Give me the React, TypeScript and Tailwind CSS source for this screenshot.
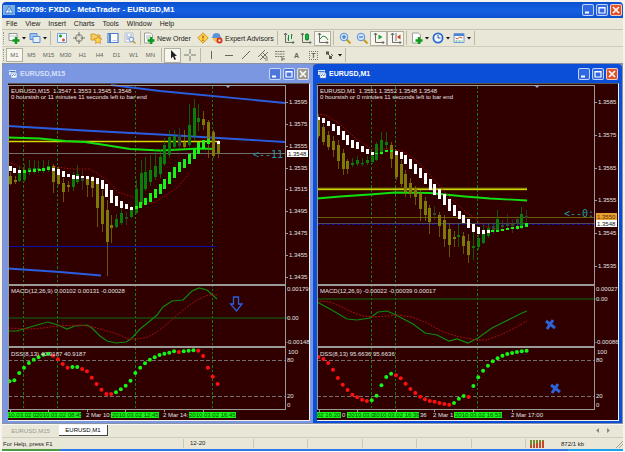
import type { ReactNode } from "react";

type Point = [number, number];
/** x, top, bottom of a body, then wick top and bottom, then colour key */
type Candle = [number, number, number, number, number, "o" | "g" | "d"];
type Block = [number, number, number, "w" | "l"];

const FONT = "font-['Liberation_Sans',Arial,sans-serif]";
const COLORS = { o: "#7d7a06", g: "#087d0a", d: "#2c4a2c", w: "#ffffff", l: "#16f416" };

const pts = (list: Point[]) => list.map((p) => p.join(",")).join(" ");

/* ---------- chart data ---------- */

interface ChartData {
  left: number;
  symbol: string;
  quotes: string;
  countdown: string;
  macd: string;
  dss: string;
  verticals: number[];
  candles: Candle[];
  blocks: Block[];
  macdMain: Point[];
  macdSignal: Point[];
  zeroY: number;
  dots: number[];
  reds: [number, number][];
  prices: [string, number][];
  macdTop: string;
  macdBottom: string;
  overlay: ReactNode;
  times: ReactNode;
}

const M15: ChartData = {
  left: 8,
  symbol: "EURUSD,M15",
  quotes: "1.3547 1.3553 1.3545 1.3548",
  countdown: "0 hourstsh or 11 minutes 11 seconds left to bar end",
  macd: "MACD(12,26,9) 0.00102 0.00131 -0.00028",
  dss: "DSS(8,13) 40.9187 40.9187",
  verticals: [24, 58, 136, 213],
  candles: [
    [10, 176, 184, 172, 185, "o"], [15, 180, 182, 176, 184, "o"], [19, 171, 181, 166, 182, "g"],
    [24, 170, 180, 164, 182, "g"], [29, 168, 170, 160, 175, "g"], [34, 168, 170, 160, 174, "g"],
    [38, 168, 170, 161, 173, "g"], [43, 168, 170, 160, 173, "g"], [48, 166, 169, 160, 172, "g"],
    [53, 166, 182, 164, 193, "o"], [58, 170, 184, 167, 185, "o"], [63, 183, 192, 178, 202, "o"],
    [68, 185, 187, 181, 192, "o"], [73, 176, 187, 172, 191, "g"], [77, 174, 182, 165, 184, "g"],
    [82, 177, 181, 170, 190, "d"], [87, 178, 185, 176, 197, "o"], [92, 181, 188, 176, 197, "o"],
    [97, 184, 208, 180, 227, "o"], [102, 196, 224, 190, 232, "o"], [107, 210, 242, 200, 276, "o"],
    [111, 225, 228, 215, 243, "o"], [116, 219, 227, 214, 228, "g"], [121, 213, 223, 208, 225, "g"],
    [126, 217, 219, 212, 225, "d"], [131, 210, 217, 206, 218, "g"], [136, 189, 213, 180, 214, "g"],
    [141, 173, 204, 160, 207, "g"], [145, 172, 189, 157, 191, "g"], [150, 170, 182, 155, 186, "g"],
    [155, 166, 177, 149, 180, "g"], [160, 157, 174, 149, 178, "g"], [164, 145, 164, 138, 166, "g"],
    [169, 137, 155, 130, 158, "g"], [174, 136, 147, 130, 150, "g"], [179, 135, 146, 128, 148, "d"],
    [184, 142, 147, 130, 149, "o"], [189, 125, 145, 104, 147, "g"], [194, 108, 136, 99, 141, "g"],
    [198, 118, 122, 104, 131, "g"], [203, 119, 125, 111, 130, "o"], [208, 122, 140, 120, 158, "o"],
    [213, 132, 156, 130, 158, "o"], [218, 143, 153, 140, 158, "o"],
  ],
  blocks: [
    [10, 166, 171, "w"], [14, 168, 173, "w"], [19, 170, 173, "w"], [24, 170, 173, "l"],
    [29, 170, 172, "l"], [34, 169, 172, "l"], [39, 169, 171, "l"], [43, 168, 171, "l"],
    [48, 167, 170, "l"], [53, 168, 171, "w"], [58, 169, 175, "w"], [63, 171, 177, "w"],
    [68, 174, 177, "w"], [73, 175, 179, "w"], [77, 176, 179, "w"], [82, 176, 178, "w"],
    [87, 176, 179, "w"], [92, 177, 181, "w"], [97, 178, 184, "w"], [102, 180, 189, "w"],
    [106, 184, 197, "w"], [111, 190, 203, "w"], [116, 196, 206, "w"], [121, 201, 208, "w"],
    [126, 204, 209, "w"], [131, 207, 210, "w"], [136, 206, 209, "l"], [140, 202, 208, "l"],
    [145, 198, 205, "l"], [150, 193, 202, "l"], [155, 189, 198, "l"], [160, 184, 194, "l"],
    [164, 179, 189, "l"], [169, 172, 184, "l"], [174, 167, 178, "l"], [179, 162, 172, "l"],
    [184, 159, 168, "l"], [189, 154, 164, "l"], [194, 149, 159, "l"], [198, 142, 154, "l"],
    [203, 140, 149, "l"], [208, 139, 144, "l"], [218, 141, 144, "w"],
  ],
  macdMain: [[8, 331], [17, 331], [27, 328], [37, 325], [48, 322], [58, 325], [67, 329], [75, 326], [87, 325], [92, 328], [100, 336], [107, 341], [116, 343], [126, 342], [131, 339], [140, 329], [150, 321], [157, 315], [163, 307], [172, 301], [183, 300], [192, 291], [199, 288], [207, 290], [217, 299]],
  macdSignal: [[8, 328], [30, 329], [43, 328], [58, 326], [80, 325], [93, 327], [107, 331], [120, 335], [128, 339], [138, 339], [148, 337], [157, 332], [167, 324], [177, 315], [187, 307], [197, 300], [208, 295], [217, 295]],
  zeroY: 318,
  dots: [298, 295, 273, 257, 243, 233, 226, 218, 215, 221, 232, 246, 257, 255, 255, 261, 268, 287, 306, 323, 336, 336, 331, 322, 311, 296, 273, 257, 244, 233, 226, 219, 215, 212, 208, 210, 208, 206, 205, 206, 222, 257, 284, 306],
  reds: [[9, 12], [15, 21], [35, 35], [39, 43]],
  prices: [["1.3595", 102], ["1.3575", 124], ["1.3555", 146], ["1.3535", 168], ["1.3515", 189], ["1.3495", 211], ["1.3475", 233], ["1.3455", 255], ["1.3435", 277]],
  macdTop: "0.00179",
  macdBottom: "-0.00148",
  overlay: (
    <>
      <path d="M8 153.500H285" stroke="#6f6f6f" />
      <path d="M8 141.500H217" stroke="#d6d600" strokeWidth="1.500" />
      <path d="M8 246.500H217" stroke="#0a0aa8" />
      <path d="M8 268.500L60 272L101 275.500" stroke="#2a5ee0" strokeWidth="1.800" />
      <path d="M111 85L160 91L285 103" stroke="#2a5ee0" strokeWidth="1.800" />
      <path d="M8 126L84 130.500L160 134.500L285 142" stroke="#2a5ee0" strokeWidth="1.800" />
      <path d="M8 137.500L40 138.500L65 141L85 142L105 145L130 149L160 150.500L200 148.500L215 149" stroke="#10e010" strokeWidth="1.800" />
      <path d="M8 162L16 165L24 169M52 166L70 169L90 169L98 174L108 181L118 192L133 197L143 205L155 202L165 196L178 187L190 172" stroke="#b00c0c" strokeWidth=".9" strokeDasharray="1.500 1.500" />
      <path d="M233.500 297h5v7h3.500l-5.500 7l-6-7h3z" stroke="#2a5ee0" strokeWidth="1.300" />
      <text x="253" y="158" fontSize="10" fill="#1f9aa5" className="font-['DejaVu_Sans_Mono',monospace]">{"<--11"}</text>
    </>
  ),
  times: (
    <>
      <rect x="8" y="412" width="73" height="6" fill="#16f416" />
      <rect x="111" y="412" width="48" height="6" fill="#16f416" />
      <rect x="189" y="412" width="47" height="6" fill="#16f416" />
      <g fill="#0b4a0b">
        <text x="8" y="417">10.03.02 0</text>
        <text x="36" y="417">2010.03.02 08:45</text>
        <text x="112" y="417">2010.03.02 12:45</text>
        <text x="189" y="417">2010.03.02 16:45</text>
      </g>
      <text x="86" y="417">2 Mar 10:</text>
      <text x="163" y="417">2 Mar 14:</text>
    </>
  ),
};

const M1: ChartData = {
  left: 317,
  symbol: "EURUSD,M1",
  quotes: "1.3551 1.3552 1.3548 1.3548",
  countdown: "0 hourstsh or 0 minutes 11 seconds left to bar end",
  macd: "MACD(12,26,9) -0.00022 -0.00039 0.00017",
  dss: "DSS(8,13) 95.6636 95.6636",
  verticals: [318, 372, 396, 478],
  candles: [
    [318, 117, 136, 114, 138, "o"], [323, 127, 142, 124, 145, "o"], [328, 135, 147, 131, 150, "o"],
    [333, 141, 150, 136, 157, "o"], [338, 145, 161, 140, 169, "o"], [343, 153, 169, 149, 175, "o"],
    [347, 161, 169, 159, 174, "o"], [352, 163, 165, 158, 167, "g"], [357, 160, 164, 156, 166, "g"],
    [362, 163, 164, 158, 166, "g"], [367, 160, 163, 156, 165, "g"], [372, 156, 162, 152, 164, "g"],
    [376, 144, 160, 142, 161, "g"], [381, 140, 153, 132, 155, "g"], [386, 142, 145, 132, 149, "g"],
    [391, 145, 159, 142, 168, "o"], [396, 155, 177, 150, 180, "o"], [401, 164, 184, 160, 187, "o"],
    [405, 174, 192, 170, 197, "o"], [410, 183, 194, 178, 198, "o"], [415, 189, 197, 186, 205, "o"],
    [420, 193, 209, 190, 221, "o"], [425, 201, 215, 197, 221, "o"], [429, 208, 222, 205, 234, "o"],
    [434, 213, 215, 206, 220, "d"], [439, 215, 226, 212, 237, "o"], [444, 220, 239, 215, 247, "o"],
    [449, 229, 245, 223, 257, "o"], [454, 237, 239, 231, 247, "o"], [458, 235, 237, 223, 247, "g"],
    [463, 236, 246, 232, 254, "o"], [468, 241, 255, 234, 263, "o"], [473, 246, 248, 230, 260, "g"],
    [478, 238, 247, 230, 250, "g"], [483, 230, 243, 225, 244, "g"], [488, 228, 236, 224, 238, "g"],
    [493, 226, 232, 222, 234, "d"], [497, 219, 230, 210, 232, "g"], [502, 225, 227, 220, 230, "d"],
    [507, 224, 226, 214, 230, "d"], [512, 224, 226, 220, 233, "d"], [517, 219, 224, 216, 230, "d"],
    [521, 214, 227, 207, 229, "g"], [526, 216, 218, 210, 222, "d"],
  ],
  blocks: [
    [318, 117, 120, "w"], [323, 118, 123, "w"], [328, 121, 126, "w"], [333, 124, 131, "w"],
    [338, 126, 135, "w"], [343, 131, 140, "w"], [347, 135, 145, "w"], [352, 140, 148, "w"],
    [357, 142, 149, "w"], [362, 146, 152, "w"], [367, 149, 154, "w"], [372, 152, 155, "w"],
    [376, 153, 154, "l"], [381, 152, 154, "l"], [386, 150, 152, "l"], [391, 150, 152, "l"],
    [396, 151, 155, "w"], [401, 152, 159, "w"], [405, 155, 164, "w"], [410, 159, 169, "w"],
    [415, 164, 174, "w"], [420, 168, 178, "w"], [425, 173, 184, "w"], [430, 179, 190, "w"],
    [434, 184, 195, "w"], [439, 189, 199, "w"], [444, 194, 205, "w"], [449, 199, 211, "w"],
    [454, 205, 216, "w"], [459, 211, 219, "w"], [463, 215, 223, "w"], [468, 219, 228, "w"],
    [473, 224, 232, "w"], [478, 227, 234, "w"], [483, 230, 234, "w"], [488, 230, 233, "w"],
    [492, 230, 232, "l"], [497, 230, 232, "l"], [502, 229, 231, "l"], [507, 228, 230, "l"],
    [512, 227, 229, "l"], [517, 226, 229, "l"], [521, 226, 228, "l"], [526, 223, 227, "l"],
  ],
  macdMain: [[317, 302], [330, 309], [347, 319], [357, 320], [370, 318], [378, 312], [387, 311], [396, 315], [413, 324], [425, 333], [437, 335], [449, 341], [457, 339], [468, 343], [478, 338], [492, 328], [502, 323], [510, 319], [522, 313], [527, 311]],
  macdSignal: [[317, 301], [330, 302], [342, 307], [352, 312], [363, 316], [377, 317], [397, 315], [412, 317], [427, 323], [443, 332], [460, 337], [477, 340], [487, 340], [500, 335], [513, 329], [527, 321]],
  zeroY: 299,
  dots: [225, 231, 243, 263, 288, 308, 324, 338, 346, 353, 357, 355, 341, 310, 285, 275, 280, 289, 305, 321, 333, 344, 352, 357, 359, 363, 366, 368, 363, 350, 342, 345, 312, 286, 266, 251, 238, 229, 221, 216, 213, 210, 208, 206],
  reds: [[0, 10], [16, 27], [31, 31]],
  prices: [["1.3585", 102], ["1.3575", 135], ["1.3565", 168], ["1.3555", 200], ["1.3545", 233], ["1.3535", 266]],
  macdTop: "0.00027",
  macdBottom: "-0.00086",
  overlay: (
    <>
      <path d="M317 217.500H594" stroke="#6a5c08" />
      <path d="M317 223.500H594" stroke="#4c4c58" />
      <path d="M317 224.500H594" stroke="#0a0aa8" strokeDasharray="3 2" />
      <path d="M317 189H527" stroke="#8c8c00" strokeWidth="2.400" />
      <path d="M317 189.500H527" stroke="#d2d200" />
      <path d="M317 198.500L340 196.500L370 194.500L395 192.500L430 193L465 196.500L490 198.500L527 200.500" stroke="#10e010" strokeWidth="1.800" />
      <path d="M317 114L326 115L340 124L355 138L372 149L390 149L402 151L416 160L430 175L446 193L462 209L473 217L485 226L500 230L520 227" stroke="#b00c0c" strokeWidth=".9" strokeDasharray="1.500 1.500" />
      <g stroke="#2f62d8" strokeWidth="3">
        <path d="M546 321L555 328M553 320L547 329" />
        <path d="M551 385L560 392M558 384L552 393" />
      </g>
      <text x="564" y="217" fontSize="10" fill="#1f9aa5" className="font-['DejaVu_Sans_Mono',monospace]">{"<--0:"}</text>
    </>
  ),
  times: (
    <>
      <rect x="317" y="412" width="24" height="6" fill="#16f416" />
      <rect x="347" y="412" width="72" height="6" fill="#16f416" />
      <rect x="454" y="412" width="48" height="6" fill="#16f416" />
      <g fill="#0b4a0b">
        <text x="317" y="417">02 16:20</text>
        <text x="348" y="417">2010.03.0</text>
        <text x="373" y="417">2010.03.02 16:36</text>
        <text x="455" y="417">2010.03.02 16:53</text>
      </g>
      <text x="342" y="417">0</text>
      <text x="420" y="417">36</text>
      <text x="433" y="417">2 Mar 1</text>
      <text x="511" y="417">2 Mar 17:00</text>
    </>
  ),
};

/* ---------- chart drawing ---------- */

function Chart({ data }: { data: ChartData }) {
  const { left } = data;
  const axis = left + 277;
  const isRed = (i: number) => data.reds.some(([a, b]) => i >= a && i <= b);
  const active = data.symbol === "EURUSD,M1";
  return (
    <svg viewBox={`${left} 84 301 336`} className={`block w-full ${FONT}`} fontSize="6" fill="#e2e2e2" role="img" aria-label={`${data.symbol} chart`}>
      <rect x={left} y="84" width="301" height="336" fill="#300000" />
      <g stroke="#108010" strokeDasharray="2.500 2" shapeRendering="crispEdges">
        {data.verticals.map((x) => <path key={x} d={`M${x - 0.5} 86V409`} />)}
      </g>
      <g fill="none">{data.overlay}</g>
      <g shapeRendering="crispEdges">
        {data.candles.map(([x, top, bottom, high, low, key]) => (
          <g key={x} fill={COLORS[key]}>
            <rect x={x} y={high} width="1" height={low - high} opacity=".7" />
            <rect x={x - 1} y={top} width="3" height={bottom - top} />
          </g>
        ))}
        {data.blocks.map(([x, top, bottom, key]) => (
          <rect key={x} x={x - 1} y={top} width="3" height={bottom - top} fill={COLORS[key]} />
        ))}
      </g>
      <path d={`M${left} ${data.zeroY}H${axis + 4}`} stroke="#0c6c0c" />
      <g stroke="#8a8a8a" strokeWidth=".8" strokeDasharray="4 2">
        <path d={`M${left} 360.500H${axis}`} />
        <path d={`M${left} 396.500H${axis}`} />
      </g>
      <polyline points={pts(data.macdMain)} fill="none" stroke="#0e8a0e" strokeWidth="1.200" />
      <polyline points={pts(data.macdSignal)} fill="none" stroke="#a01010" strokeWidth="1" strokeDasharray="2 1.200" />
      {data.dots.map((y, i) => (
        <circle key={i} cx={left + 1.5 + i * 4.84} cy={282 + y / 3} r="2" fill={isRed(i) ? "#ff1010" : "#16f416"} />
      ))}
      <g stroke="#9a9a96" fill="none" shapeRendering="crispEdges">
        <path d={`M${left} 85.500H${axis + 1}M${axis + 0.5} 85V409M${left} 409.500H${axis + 1}M${left + 0.5} 85V409`} />
        <path d={`M${left} 285H${axis + 1}M${left} 347H${axis + 1}`} strokeWidth="2" />
        {[2, 40, 79, 117, 156, 195].map((x) => <path key={x} d={`M${left + x} 409V412`} />)}
        {data.prices.map(([p, y]) => <path key={p} d={`M${axis} ${y + 0.5}H${axis + 3}`} />)}
      </g>
      <path d={`M${left + 217} 85h6l-3 3z`} fill="#8fa8c8" />
      <text x={left + 3} y="93" xmlSpace="preserve">{`${data.symbol}  ${data.quotes}`}</text>
      <text x={left + 3} y="99">{data.countdown}</text>
      <text x={left + 3} y="293">{data.macd}</text>
      <text x={left + 3} y="356">{data.dss}</text>
      {data.prices.map(([p, y]) => <text key={p} x={axis + 4} y={y + 2}>{p}</text>)}
      <text x={axis + 2} y="291">{data.macdTop}</text>
      <text x={axis + 2} y={data.zeroY + 2}>0.00</text>
      <text x={axis + 1} y="344">{data.macdBottom}</text>
      <text x={axis + 3} y="354">100</text>
      <text x={axis + 2} y="362">80</text>
      <text x={axis + 2} y="398">20</text>
      <text x={axis + 2} y="407">0</text>
      {active ? (
        <>
          <rect x={axis + 2} y="213" width="21" height="7" fill="#e8a030" />
          <text x={axis + 3} y="219" fill="#603000">1.3550</text>
          <rect x={axis + 2} y="220" width="21" height="7" fill="#fff" />
          <text x={axis + 3} y="226" fill="#111">1.3548</text>
        </>
      ) : (
        <>
          <rect x={axis + 2} y="150" width="21" height="7" fill="#fff" />
          <text x={axis + 3} y="156" fill="#111">1.3548</text>
        </>
      )}
      {data.times}
    </svg>
  );
}

/* ---------- window parts ---------- */

function Controls({ muted = false }: { muted?: boolean }) {
  const base = "flex size-3 items-center justify-center rounded-xs border border-white/70";
  return (
    <div className="flex gap-0.5">
      <button aria-label="Minimize" className={`${base} ${muted ? "bg-[#4c78de]" : "bg-[#2f68e0]"}`}>
        <svg viewBox="0 0 10 10" className="size-2.5"><path d="M2 7.500h4" stroke="#fff" strokeWidth="2" /></svg>
      </button>
      <button aria-label="Maximize" className={`${base} ${muted ? "bg-[#4c78de]" : "bg-[#2f68e0]"}`}>
        <svg viewBox="0 0 10 10" className="size-2.5"><path d="M2 2.500h6v5.500h-6zM2 3h6" fill="none" stroke="#fff" strokeWidth="1.200" /></svg>
      </button>
      <button aria-label="Close" className={`${base} ${muted ? "bg-[#9b9b94]" : "bg-[#e0532a]"}`}>
        <svg viewBox="0 0 10 10" className="size-2.5"><path d="M2 2l6 6M8 2l-6 6" stroke="#fff" strokeWidth="1.600" /></svg>
      </button>
    </div>
  );
}

function ChartWindow({ data, active }: { data: ChartData; active: boolean }) {
  return (
    <section className={`min-w-0 rounded-t-sm pr-[3px] pb-0.5 ${active ? "bg-[#0b4fd8] pl-1" : "bg-[#7b97e2] pl-[5px]"}`}>
      <header className={`flex h-[19px] items-center gap-0.5 pr-px text-[7px] font-bold ${active ? "text-white" : "text-[#d5e0f8]"}`}>
        <svg viewBox="0 0 10 10" className="size-2.5" aria-hidden="true">
          <path d="M1 1h7v5H1z" fill="#dce8f8" /><path d="M3 4h6v5H3z" fill="#fff" stroke="#6a8cc8" strokeWidth=".6" />
          <path d="M1.500 2.500h6M4 7l1.500-1.500l1 1l1.500-1" fill="none" stroke="#3d74c8" />
        </svg>
        <h2 className="flex-1">{data.symbol}</h2>
        <Controls muted={!active} />
      </header>
      <div className="border-t border-r border-b border-t-[#56564e] border-r-[#f2f2ec] border-b-[#f2f2ec]"><Chart data={data} /></div>
    </section>
  );
}

/* ---------- toolbar ---------- */

const Caret = () => <svg viewBox="0 0 4 3" className="h-[3px] w-1" aria-hidden="true"><path d="M0 0h4l-2 2.500z" fill="#111" /></svg>;
const Grip = () => <span className="mx-px h-3 w-0.5 shrink-0 border-l border-dotted border-[#9b988a]" />;
const Rule = () => <span className="mx-[2px] h-3.5 w-px shrink-0 bg-[#bdb9a6]" />;

function Tool({ label, children, pressed = false, caret = false }: { label: string; children: ReactNode; pressed?: boolean; caret?: boolean }) {
  return (
    <button aria-label={label} className={`flex h-[15px] shrink-0 items-center justify-center ${caret ? "w-[21px] gap-0.5" : "w-[17px]"} ${pressed ? "border border-[#b3af9e] bg-[#f7f6ee]" : ""}`}>
      <svg viewBox="0 0 12 12" className="size-3 shrink-0" fill="none" aria-hidden="true">{children}</svg>
      {caret && <Caret />}
    </button>
  );
}

const Plus = () => <path d="M8 5v7M4.500 8.500h7" stroke="#0c9a1c" strokeWidth="2.400" />;
const Axes = () => <path d="M2.500 1v9.500H11M1 3l1.500-2L4 3M9.500 9l1.500 1.500L9.500 12" stroke="#5c5c54" strokeWidth=".9" />;
const Lens = ({ minus = false }) => (
  <>
    <path d="M7.500 7.500l4 4" stroke="#c99a20" strokeWidth="2" />
    <circle cx="5" cy="5" r="3.800" fill="#cfe3fa" stroke="#5b8fd8" />
    <path d={minus ? "M3 5h4" : "M3 5h4M5 3v4"} stroke="#2b66bd" />
  </>
);

const Page = () => <path d="M1.500 1h6l2 2v8h-8z" fill="#fff" stroke="#888c84" strokeWidth=".8" />;

const TIMEFRAMES = ["M1", "M5", "M15", "M30", "H1", "H4", "D1", "W1", "MN"];

export default function App() {
  return (
    <main className={`bg-[#f4f3ec] px-0.5 pt-0.5 text-[7px] leading-none text-[#1c1c1a] ${FONT}`}>
      <header className="flex h-4 items-center gap-0.5 rounded-t-sm bg-linear-to-b from-[#0a50d0] via-[#1560e0] to-[#0c50cf] px-px text-white">
        <svg viewBox="0 0 12 12" className="size-3" aria-hidden="true">
          <path d="M0 1h12v10H0z" fill="#77aee8" /><path d="M6 2l4 7H2z" fill="#eef7ff" stroke="#2769b8" strokeWidth=".7" /><path d="M3 6h6M6 3v6" stroke="#3a85d0" strokeWidth=".7" />
        </svg>
        <h1 className="flex-1 text-[8px] font-bold">560799: FXDD - MetaTrader - EURUSD,M1</h1>
        <Controls />
      </header>

      <div className="bg-[#e9e7d8]">
        <nav className="flex h-3 items-center gap-2 border-b border-[#c6c3b2] pl-1 text-[7px]">
          {["File", "View", "Insert", "Charts", "Tools", "Window", "Help"].map((m) => <button key={m}>{m}</button>)}
        </nav>

        <div className="flex h-[17px] items-center border-b border-[#cfccbb]">
          <Grip />
          <Tool label="New chart" caret><path d="M1 1.500h8v7H1z" fill="#fff" stroke="#8a9490" /><path d="M2 4h6" stroke="#b0c0c0" /><Plus /></Tool>
          <Tool label="Profiles" caret><path d="M1 1.500h7v6H1z" fill="#9fc4f0" stroke="#5a8ed0" /><path d="M4 4.500h7v6H4z" fill="#e5f0fc" stroke="#5a8ed0" /></Tool>
          <Rule />
          <Tool label="Market watch"><path d="M1.500 1.500h9v9h-9z" fill="#f3f8ff" stroke="#79a3dc" /><path d="M3 4h3M4.500 2.500v3" stroke="#1d9c2c" strokeWidth="1.500" /><path d="M6 8h3M7.500 6.500v3" stroke="#e0502c" strokeWidth="1.500" /></Tool>
          <Tool label="Data window"><circle cx="6" cy="6" r="3.500" stroke="#77776e" /><path d="M6 0v4.500M6 7.500V12M0 6h4.500M7.500 6H12" stroke="#77776e" /></Tool>
          <Tool label="Navigator"><path d="M1 2h4l1 1h4v5H1z" fill="#f6cc60" stroke="#c79024" strokeWidth=".8" /><path d="M8 4l1.200 2.500l2.800.3l-2 2l.5 2.700L8 10.200l-2.500 1.300L6 8.800l-2-2l2.800-.3z" fill="#ffd94a" stroke="#d07d1c" strokeWidth=".7" /></Tool>
          <Tool label="Terminal"><path d="M1 1.500h10v9H1z" fill="#fff" stroke="#4d82cf" strokeWidth="1.200" /><path d="M2 2h2v8H2z" fill="#4d82cf" /><path d="M5.500 8.500h4" stroke="#b0c8ea" /></Tool>
          <Tool label="Strategy tester"><path d="M1 1h8v9H1z" fill="#f7faff" stroke="#a8b4c8" strokeWidth=".8" /><path d="M3 2v6M5 4v4M7 2v4" stroke="#8fa4c0" /><circle cx="7.500" cy="7.500" r="2.200" stroke="#6f9bd6" /><path d="M9 9l2.500 2.500" stroke="#c99a20" strokeWidth="1.500" /></Tool>
          <Rule />
          <button className="flex w-[51px] shrink-0 items-center gap-0.5 whitespace-nowrap">
            <svg viewBox="0 0 12 12" className="size-3 shrink-0" fill="none" aria-hidden="true"><Page /><path d="M3 4h5M3 6h3" stroke="#8aa4b0" strokeWidth=".8" /><Plus /></svg>
            New Order
          </button>
          <Tool label="MetaEditor"><path d="M6 .8L11.200 6L6 11.200L.8 6z" fill="#ffd24a" stroke="#d6921c" /><path d="M6 3.500v3M6 7.500v1.500" stroke="#a05a10" strokeWidth="1.300" /></Tool>
          <button className="flex w-[64px] shrink-0 items-center gap-0.5 whitespace-nowrap">
            <svg viewBox="0 0 12 12" className="size-3 shrink-0" fill="none" aria-hidden="true"><path d="M1.500 5a4 4 0 018 0l1.500 1H0z" fill="#5d93d8" /><path d="M2 6h7v2l-3 3l-4-3z" fill="#f0c050" /><circle cx="8.500" cy="8.500" r="3" fill="#d8321c" /><path d="M7.500 7.500h2v2h-2z" fill="#fff" /></svg>
            Expert Advisors
          </button>
          <Rule />
          <Tool label="Bar chart"><Axes /><path d="M5.500 3v6M8.500 2v5M4.500 7h1M8.500 3h1" stroke="#16883a" /></Tool>
          <Tool label="Candlesticks"><Axes /><path d="M7 1v8" stroke="#0c8a30" /><path d="M5.500 2.500h3v5h-3z" fill="#18b848" stroke="#0c8a30" /></Tool>
          <Tool label="Line chart" pressed><Axes /><path d="M3 7l3-3l3 1l2 3" stroke="#388a48" /></Tool>
          <Rule />
          <Tool label="Zoom in"><Lens /></Tool>
          <Tool label="Zoom out"><Lens minus /></Tool>
          <Tool label="Auto scroll" pressed><Axes /><path d="M5.500 2.500l4 2.500l-4 2.500z" fill="#18a040" /></Tool>
          <Tool label="Chart shift" pressed><Axes /><path d="M6 1v8" stroke="#777" /><path d="M10.500 2.500L7 5l3.500 2.500z" fill="#cc3a24" /></Tool>
          <Rule />
          <Tool label="Indicators" caret><Page /><Plus /></Tool>
          <Tool label="Periods" caret><circle cx="6" cy="6" r="4.600" fill="#f1f7ff" stroke="#2b6bd0" strokeWidth="1.800" /><path d="M6 3v3h2.500" stroke="#34558c" /></Tool>
          <Tool label="Templates" caret><path d="M1 1.500h10v9H1z" fill="#fff" stroke="#6d9ad8" /><path d="M1 3h10" stroke="#4d82cf" strokeWidth="2" /><path d="M2.500 6l2 1l2-2l3 1" stroke="#d0503c" /><path d="M2.500 9h7" stroke="#3da050" strokeDasharray="2 1" /></Tool>
          <Rule />
        </div>

        <div className="flex h-4 items-center text-[6px] text-[#65645c]">
          <Grip />
          {TIMEFRAMES.map((t, i) => (
            <button key={t} aria-pressed={i === 0} className={`h-3.5 w-[17px] shrink-0 ${i === 0 ? "border border-[#b3af9e] bg-[#f7f6ee]" : ""}`}>{t}</button>
          ))}
          <Rule />
          <Tool label="Cursor" pressed><path d="M4 1v8.500l2-2l1.500 3.500l1.500-.7L7.500 7H10z" fill="#222" /></Tool>
          <Tool label="Crosshair"><path d="M6 0v5M6 7v5M0 6h5M7 6h5" stroke="#77776e" /></Tool>
          <Rule />
          <Tool label="Vertical line"><path d="M5.500 2v8" stroke="#66665e" /></Tool>
          <Tool label="Horizontal line"><path d="M2 6.500h8" stroke="#66665e" /></Tool>
          <Tool label="Trendline"><path d="M2 10l8-8" stroke="#66665e" /></Tool>
          <Tool label="Equidistant channel"><path d="M1 8l7-7M3 11l8-8M3 5l5 5M5 3l5 5" stroke="#66665e" strokeWidth=".9" /><path d="M8 9h3M8 11h3" stroke="#66665e" strokeWidth=".8" /></Tool>
          <Tool label="Fibonacci retracement"><path d="M1 2.500h10M1 5h10M1 7.500h10" stroke="#66665e" strokeWidth=".8" strokeDasharray="2 .5" /><path d="M8 8v4M8 10h3" stroke="#66665e" /></Tool>
          <button aria-label="Text" className="w-[17px] shrink-0 text-[7px] font-bold">A</button>
          <button aria-label="Text label" className="flex w-[17px] shrink-0 justify-center text-[7px]"><span className="size-[9px] border border-dotted border-[#77776e] font-bold">T</span></button>
          <Tool label="Arrows" caret><path d="M2 2.500h3v3H2zM5 7h3v3H5z" fill="#55554e" /><path d="M4 5l4 4M7 5l2 2" stroke="#55554e" /></Tool>
          <Rule />
        </div>
      </div>

      <div className="grid grid-cols-[310fr_309fr] bg-[#8793a5] px-px pt-px pb-px">
        <ChartWindow data={M15} active={false} />
        <ChartWindow data={M1} active />
      </div>

      <footer className="bg-[#e9e7d8] text-[6px]">
        <div className="flex h-[13px] items-start border-t border-[#f8f8f2] pr-3">
          <button className="h-[11px] w-[57px] text-[#9a988c]">EURUSD,M15</button>
          <button className="h-[11px] w-[49px] border-r border-b border-[#444] bg-white text-black">EURUSD,M1</button>
          <span className="flex-1" />
          <svg viewBox="0 0 16 8" className="mt-0.5 h-2 w-4" aria-hidden="true"><path d="M4 1v5l-3-2.500zM12 1v5l3-2.500z" fill="#8c8a7e" /></svg>
        </div>
        <div className="flex h-3 items-center border-t border-[#d0cdbc]">
          <p className="w-[181px] shrink-0 pl-px">For Help, press F1</p>
          <p className="h-[9px] w-[70px] shrink-0 border-l border-[#cbc8b8] pt-px pl-1.5">12-20</p>
          {[0, 1, 2, 3, 4].map((n) => <span key={n} className="h-[9px] flex-1 border-l border-[#cbc8b8]" />)}
          <span className="flex h-[9px] w-[98px] shrink-0 items-center gap-4 border-l border-[#cbc8b8] pl-1">
            <svg viewBox="0 0 15 8" className="h-2 w-[15px]" aria-hidden="true">
              <path d="M1 0v8M4 0v8M7 0v8M10 0v8M13 0v8" stroke="#748c28" strokeWidth="2" /><path d="M1 5v3M4 4v4M7 3v5M10 2v6M13 1v7" stroke="#c24a26" strokeWidth="2" />
            </svg>
            872/1 kb
            <svg viewBox="0 0 8 8" className="ml-auto size-2" aria-hidden="true"><path d="M1 8l7-7M4 8l4-4" stroke="#a5a293" /></svg>
          </span>
        </div>
      </footer>
      <div className="flex h-0.5 bg-[#2f77e6]"><span className="w-[58px] bg-[#4c9a44]" /><span className="flex-1" /><span className="w-[55px] bg-[#18a0ee]" /></div>
    </main>
  );
}
